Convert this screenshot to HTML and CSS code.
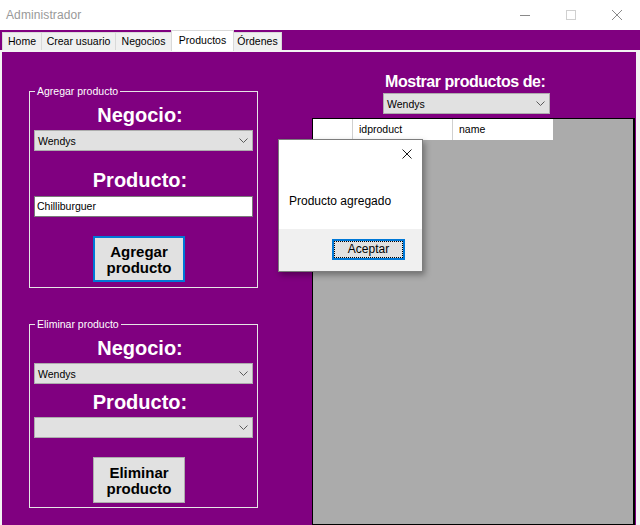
FILE: index.html
```html
<!DOCTYPE html>
<html lang="es">
<head>
<meta charset="utf-8">
<title>Administrador</title>
<link rel="stylesheet" href="styles.css">
</head>
<body>
<div class="window">
  <div class="titlebar">
    <span class="title">Administrador</span>
    <div class="controls">
      <svg class="ctl" width="12" height="12" viewBox="0 0 12 12"><line x1="1" y1="6.5" x2="11" y2="6.5" stroke="#8a8a8a" stroke-width="1"/></svg>
      <svg class="ctl" width="12" height="12" viewBox="0 0 12 12"><rect x="1.5" y="1.5" width="9" height="9" fill="none" stroke="#d0d0d0" stroke-width="1"/></svg>
      <svg class="ctl" width="12" height="12" viewBox="0 0 12 12"><path d="M1 1 L11 11 M11 1 L1 11" stroke="#8a8a8a" stroke-width="1"/></svg>
    </div>
  </div>

  <div class="tabstrip">
    <div class="tab t-home">Home</div>
    <div class="tab t-crear">Crear usuario</div>
    <div class="tab t-neg">Negocios</div>
    <div class="tab active t-prod">Productos</div>
    <div class="tab t-ord">Órdenes</div>
  </div>

  <div class="tabbody">
    <div class="tabpage">
      <div class="leftcol">
        <fieldset class="group g-add">
          <legend>Agregar producto</legend>
          <div class="heading h-first">Negocio:</div>
          <div class="combo">
            <span>Wendys</span>
            <svg class="chev" width="9" height="5" viewBox="0 0 9 5"><polyline points="0.5,0.5 4.5,4.5 8.5,0.5" fill="none" stroke="#5a5a5a" stroke-width="1"/></svg>
          </div>
          <div class="heading h-second">Producto:</div>
          <div class="textbox">Chilliburguer</div>
          <button class="btn btn-focus">Agregar<br>producto</button>
        </fieldset>

        <fieldset class="group g-del">
          <legend>Eliminar producto</legend>
          <div class="heading h-first2">Negocio:</div>
          <div class="combo">
            <span>Wendys</span>
            <svg class="chev" width="9" height="5" viewBox="0 0 9 5"><polyline points="0.5,0.5 4.5,4.5 8.5,0.5" fill="none" stroke="#5a5a5a" stroke-width="1"/></svg>
          </div>
          <div class="heading h-second2">Producto:</div>
          <div class="combo">
            <span></span>
            <svg class="chev" width="9" height="5" viewBox="0 0 9 5"><polyline points="0.5,0.5 4.5,4.5 8.5,0.5" fill="none" stroke="#5a5a5a" stroke-width="1"/></svg>
          </div>
          <button class="btn btn-del">Eliminar<br>producto</button>
        </fieldset>
      </div>

      <div class="rightcol">
        <div class="showlabel">Mostrar productos de:</div>
        <div class="combo combo-show">
          <span>Wendys</span>
          <svg class="chev" width="9" height="5" viewBox="0 0 9 5"><polyline points="0.5,0.5 4.5,4.5 8.5,0.5" fill="none" stroke="#5a5a5a" stroke-width="1"/></svg>
        </div>
        <div class="grid">
          <div class="gridhead">
            <div class="cell c-row"></div>
            <div class="cell c-id">idproduct</div>
            <div class="cell c-name">name</div>
          </div>
        </div>
      </div>

      <div class="dialog">
        <div class="dlg-top">
          <svg class="dlg-close" width="10" height="10" viewBox="0 0 10 10"><path d="M0.5 0.5 L9.5 9.5 M9.5 0.5 L0.5 9.5" stroke="#1a1a1a" stroke-width="1"/></svg>
          <div class="dlg-msg">Producto agregado</div>
        </div>
        <div class="dlg-bottom">
          <button class="dlg-btn"><span>Aceptar</span></button>
        </div>
      </div>
    </div>
  </div>
</div>
</body>
</html>
```

FILE: styles.css
```css
* { box-sizing: border-box; }

html, body {
  margin: 0;
  padding: 0;
}

body {
  width: 640px;
  height: 525px;
  overflow: hidden;
  font-family: "Liberation Sans", Arial, sans-serif;
  font-size: 11px;
  color: #000;
  background: #fff;
}

.window {
  width: 640px;
  height: 525px;
  display: flex;
  flex-direction: column;
}

/* Title bar */
.titlebar {
  height: 30px;
  background: #fff;
  display: flex;
  align-items: center;
  justify-content: space-between;
  padding-left: 6px;
}

.title {
  font-size: 12px;
  color: #999;
  letter-spacing: 0.1px;
}

.controls {
  display: flex;
  align-items: center;
  gap: 34px;
  padding-right: 17px;
}

.ctl { display: block; }

/* Tabs */
.tabstrip {
  height: 20px;
  background: #800080;
  display: flex;
  align-items: flex-end;
  padding-left: 2px;
}

.tab {
  height: 18px;
  background: #f0f0f0;
  border: 1px solid #d9d9d9;
  border-bottom: none;
  margin-right: -1px;
  font-size: 10.5px;
  line-height: 17px;
  text-align: center;
  white-space: nowrap;
}

.t-home { width: 40px; }
.t-crear { width: 75px; }
.t-neg { width: 57px; }
.t-prod { width: 63px; }
.t-ord { width: 49px; }

.tab.active {
  height: 21px;
  margin-bottom: -1px;
  background: #fff;
  position: relative;
  z-index: 1;
  line-height: 18px;
  border-color: #d9d9d9;
}

/* Tab page */
.tabbody {
  flex: 1;
  background: #f3f3f3;
  padding: 2px 4px 0 2px;
  display: flex;
}

.tabpage {
  flex: 1;
  background: #800080;
  position: relative;
  display: flex;
}

.leftcol {
  width: 284px;
  padding-left: 27px;
  padding-top: 33px;
  display: flex;
  flex-direction: column;
}

/* Group boxes */
.group {
  width: 229px;
  margin: 0;
  padding: 0 0 0 4px;
  border: 1px solid #e6e6e6;
  color: #fff;
  display: flex;
  flex-direction: column;
}

.g-add { height: 203px; }
.g-del { height: 190px; margin-top: 30px; }

.group legend {
  font-size: 10.5px;
  color: #fff;
  padding: 0 2px;
  margin-left: 1px;
  line-height: 12px;
}

.heading {
  font-family: "Liberation Sans", Arial, sans-serif;
  font-weight: bold;
  font-size: 20px;
  line-height: 24px;
  height: 24px;
  color: #fff;
  text-align: center;
  width: 212px;
}

.h-first { margin-top: 6px; }
.h-second { margin-top: 17px; }
.h-first2 { margin-top: 6px; }
.h-second2 { margin-top: 6px; }

.combo {
  width: 219px;
  height: 21px;
  background: #e1e1e1;
  border: 1px solid #adadad;
  margin-top: 3px;
  display: flex;
  align-items: center;
  justify-content: space-between;
  padding: 0 4px 0 3px;
  color: #000;
  font-size: 10.5px;
}

.chev { display: block; }

.textbox {
  width: 219px;
  height: 21px;
  background: #fff;
  border: 1px solid #7a7a7a;
  margin-top: 4px;
  padding: 0 2px;
  color: #000;
  font-size: 10.5px;
  line-height: 19px;
}

.btn {
  width: 92px;
  height: 46px;
  margin-left: 59px;
  background: #e1e1e1;
  font-family: "Liberation Sans", Arial, sans-serif;
  font-weight: bold;
  font-size: 15px;
  line-height: 16px;
  color: #000;
  padding: 1px 0 0;
  text-align: center;
}

.btn-focus {
  margin-top: 19px;
  border: 2px solid #0078d7;
}

.btn-del {
  margin-top: 19px;
  border: 1px solid #adadad;
}

/* Right column */
.rightcol {
  display: flex;
  flex-direction: column;
  padding-top: 20px;
}

.showlabel {
  font-weight: bold;
  font-size: 16px;
  letter-spacing: -0.45px;
  line-height: 20px;
  color: #fff;
  margin-left: 99px;
  white-space: nowrap;
}

.combo-show {
  width: 167px;
  margin-top: 1px;
  margin-left: 97px;
}

.grid {
  width: 323px;
  height: 407px;
  margin-top: 4px;
  margin-left: 26px;
  background: #ababab;
  border: 1px solid #000;
  border-right-width: 2px;
}

.gridhead {
  display: flex;
  height: 21px;
}

.cell {
  background: #fff;
  border-right: 1px solid #d0d0d0;
  height: 21px;
  line-height: 20px;
  padding-left: 6px;
  font-size: 10.5px;
}

.c-row { width: 40px; }
.c-id { width: 100px; }
.c-name { width: 100px; border-right: none; }

/* Message box overlay */
.dialog {
  position: absolute;
  left: 276px;
  top: 87px;
  width: 145px;
  height: 133px;
  border: 1px solid #7d7d7d;
  background: #fff;
  box-shadow: 2px 3px 6px rgba(0,0,0,0.35);
  display: flex;
  flex-direction: column;
}

.dlg-top {
  height: 89px;
  position: relative;
  background: #fff;
}

.dlg-close {
  position: absolute;
  left: 123px;
  top: 9px;
}

.dlg-msg {
  position: absolute;
  left: 10px;
  top: 54px;
  font-size: 12px;
  color: #000;
  white-space: nowrap;
}

.dlg-bottom {
  flex: 1;
  background: #f0f0f0;
  padding: 10px 0 0 53px;
}

.dlg-btn {
  width: 73px;
  height: 21px;
  border: 2px solid #0078d7;
  background: #e1e1e1;
  padding: 0;
  font-family: "Liberation Sans", Arial, sans-serif;
  font-size: 12px;
  color: #000;
  display: flex;
}

.dlg-btn span {
  flex: 1;
  border: 1px dotted #000;
  line-height: 15px;
  text-align: center;
}
```
